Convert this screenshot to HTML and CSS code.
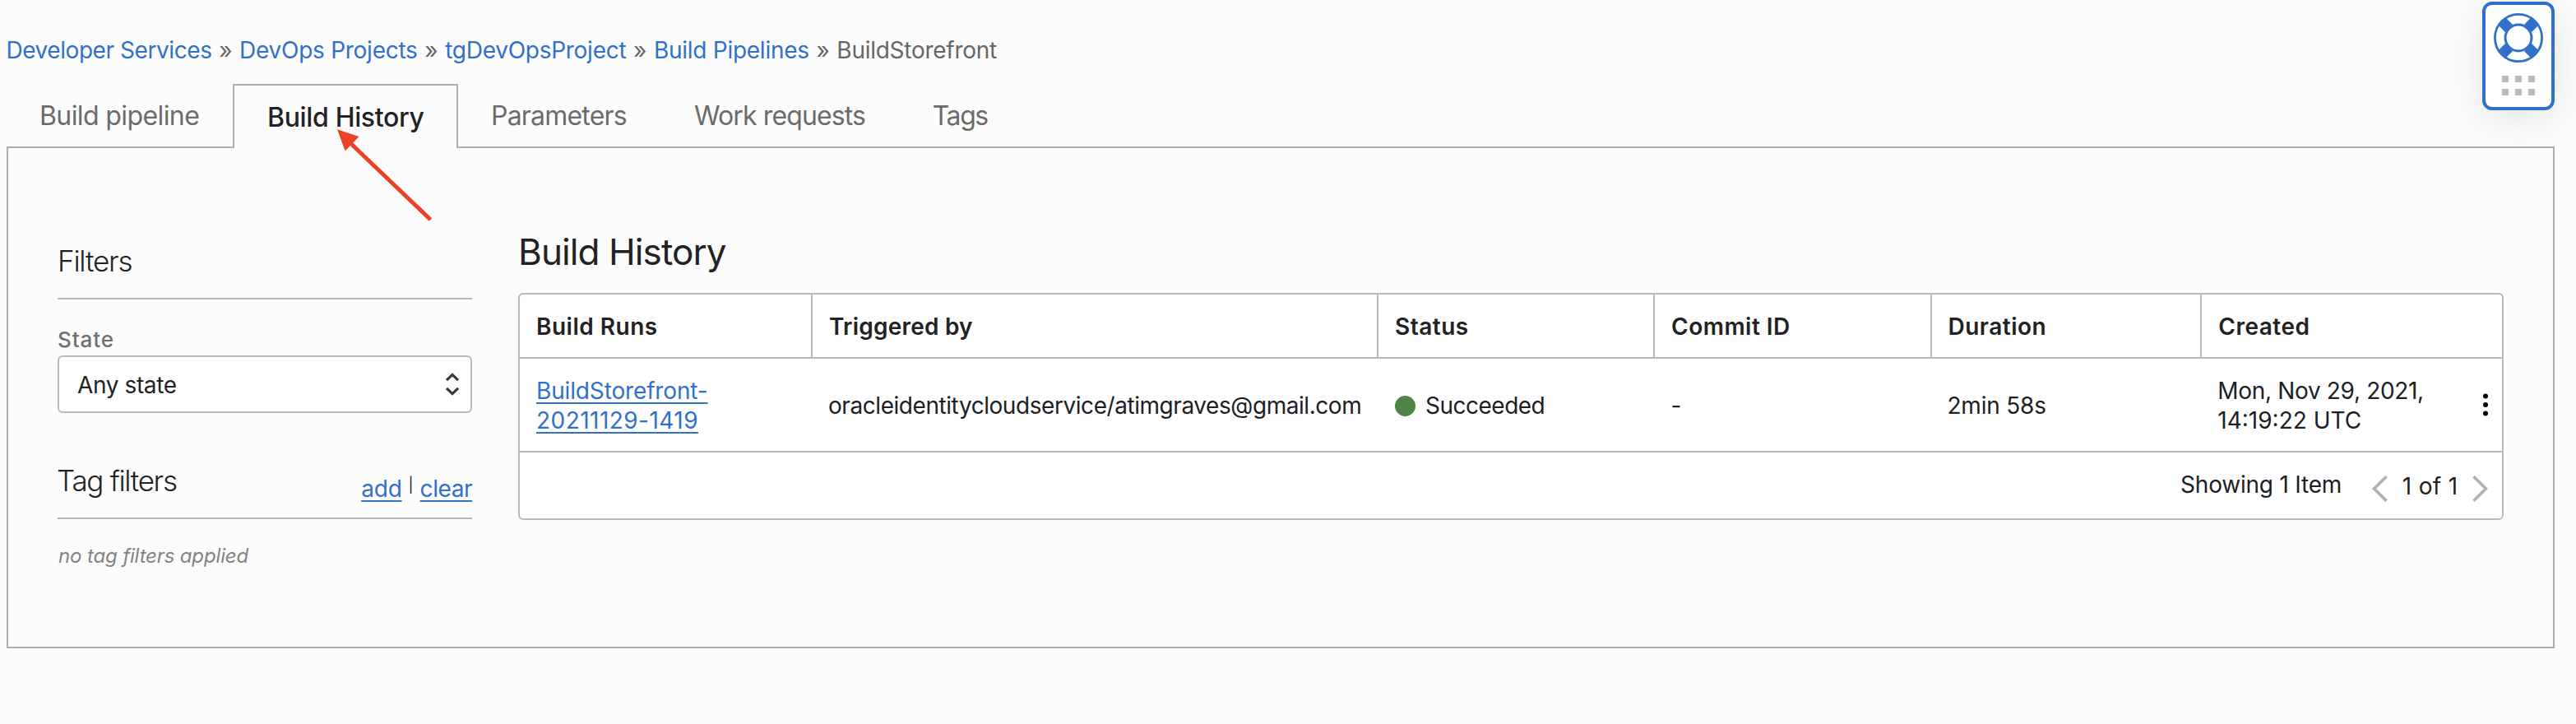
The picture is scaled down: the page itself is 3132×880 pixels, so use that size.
FILE: index.html
```
<!DOCTYPE html>
<html lang="en">
<head>
<meta charset="utf-8">
<title>Build History</title>
<link rel="stylesheet" href="styles.css">
</head>
<body>
<nav class="crumbs">
  <a class="crumb-first">Developer Services</a><span class="sep">»</span><a>DevOps Projects</a><span class="sep">»</span><a>tgDevOpsProject</a><span class="sep">»</span><a>Build Pipelines</a><span class="sep">»</span><span class="current">BuildStorefront</span>
</nav>
<div class="tabs">
  <div class="tab tab-pipeline">Build pipeline</div>
  <div class="tab tab-active">Build History</div>
  <div class="tab tab-params">Parameters</div>
  <div class="tab tab-work">Work requests</div>
  <div class="tab tab-tags">Tags</div>
</div>
<section class="panel">
  <aside class="sidebar">
    <div class="side-head"><h3 class="side-title">Filters</h3></div>
    <label class="state-label">State</label>
    <div class="select">
      <span>Any state</span>
      <svg class="select-icon" width="18" height="30" viewBox="0 0 18 30"><path d="M2 10.2 9 3.4l7 6.8M2 19.8l7 6.8 7-6.8" fill="none" stroke="#3a3a3a" stroke-width="3.2"/></svg>
    </div>
    <div class="side-head tag-head">
      <h3 class="side-title tag-title">Tag filters</h3>
      <div class="tag-links"><a class="link link-add">add</a><span class="pipe">|</span><a class="link link-clear">clear</a></div>
    </div>
    <p class="no-tags">no tag filters applied</p>
  </aside>
  <main class="main">
    <h2 class="title">Build History</h2>
    <div class="table">
      <div class="row head">
        <div class="th">Build Runs</div>
        <div class="th th-trigger">Triggered by</div>
        <div class="th">Status</div>
        <div class="th">Commit ID</div>
        <div class="th">Duration</div>
        <div class="th">Created</div>
      </div>
      <div class="row body">
        <div class="td run"><a class="link"><span class="run-name">BuildStorefront-</span><br><span class="run-id">20211129-1419</span></a></div>
        <div class="td user">oracleidentitycloudservice/atimgraves@gmail.com</div>
        <div class="td status"><span class="dot"></span>Succeeded</div>
        <div class="td commit">-</div>
        <div class="td duration">2min 58s</div>
        <div class="td created">
          <div><span class="date">Mon, Nov 29, 2021,</span><br><span>14:19:22 UTC</span></div>
          <svg class="kebab" width="6" height="28" viewBox="0 0 6 28"><circle cx="3" cy="3.6" r="3"/><circle cx="3" cy="14" r="3"/><circle cx="3" cy="24.4" r="3"/></svg>
        </div>
      </div>
      <div class="foot">
        <span class="showing">Showing 1 Item</span>
        <svg class="chev" width="19" height="32" viewBox="0 0 19 32"><path d="M17.5 1.2 2.5 16l15 14.8"/></svg>
        <span class="page">1 of 1</span>
        <svg class="chev" width="19" height="32" viewBox="0 0 19 32"><path d="M1.5 1.2l15 14.8-15 14.8"/></svg>
      </div>
    </div>
  </main>
</section>

<div class="help">
  <svg width="60" height="60" viewBox="-30 -30 60 60">
    <g fill="none" stroke="#3070cb">
      <circle r="28.6" stroke-width="2.8"/>
      <circle r="16" stroke-width="3"/>
      <path d="M11.6 11.6 19.6 19.6M-11.6 11.6-19.6 19.6M11.6-11.6 19.6-19.6M-11.6-11.6-19.6-19.6" stroke-width="12.8"/>
    </g>
  </svg>
  <div class="grip"><i></i><i></i><i></i><i></i><i></i><i></i></div>
</div>
<svg class="arrow" width="118" height="114" viewBox="408 155 118 114">
  <path d="M425 173 523.5 267" stroke="#eb4127" stroke-width="5" fill="none"/>
  <path d="M410 157.3 436.5 166 419.6 183.5z" fill="#eb4127"/>
</svg>
</body>
</html>
```
FILE: styles.css
```
* { box-sizing: border-box; }
body {
  margin: 0;
  width: 3132px;
  height: 880px;
  position: relative;
  overflow: hidden;
  background: #fcfcfc;
  color: #222;
  font: 400 28px/36px Inter, "Liberation Sans", sans-serif;
  white-space: nowrap;
}
h2, h3, p { margin: 0; }

.crumbs {
  display: flex;
  padding: 43px 0 0 7.4px;
  height: 102px;
  color: #666;
  letter-spacing: -0.265px;
}
.crumbs a { color: #3070cb; }
.crumbs .crumb-first { letter-spacing: -0.43px; }
.sep { width: 33.6px; text-align: center; }

.tabs {
  display: flex;
  height: 78px;
  margin: 0 0 -2px 8px;
  position: relative;
  z-index: 1;
  font-size: 32px;
  color: #6b6b6b;
}
.tab { padding: 21px 40px 0; }
.tab-pipeline { letter-spacing: -0.6px; width: 275px; }
.tab-active {
  width: 274px;
  padding: 21px 0 0 40px;
  border: 2px solid #adadad;
  border-bottom: 0;
  background: #fcfcfc;
  color: #222;
  font-weight: 500;
  letter-spacing: -0.34px;
}
.tab-params { letter-spacing: -0.79px; }
.tab-work { letter-spacing: -0.87px; padding-left: 42px; }
.tab-tags { letter-spacing: -1.4px; padding-left: 41.5px; }

.panel {
  display: flex;
  gap: 56px;
  width: 3098px;
  height: 610px;
  margin-left: 8px;
  padding: 100px 60px 0;
  border: 2px solid #adadad;
}

.sidebar { width: 504px; padding-top: 16px; }
.side-head {
  display: flex;
  justify-content: space-between;
  height: 68px;
  border-bottom: 2px solid #b3bac1;
}
.side-title {
  font-size: 35px;
  line-height: 42px;
  font-weight: 300;
  letter-spacing: -1.2px;
}
.tag-title { letter-spacing: -1.3px; margin-left: -1px; }
.state-label {
  display: block;
  margin: 32px 0 3px;
  font-size: 26px;
  line-height: 33px;
  font-weight: 500;
  letter-spacing: 0.9px;
  color: #707070;
}
.select {
  display: flex;
  align-items: center;
  justify-content: space-between;
  height: 70px;
  padding: 0 13px 0 22px;
  border: 2px solid #b3bac1;
  border-radius: 6px;
  background: #fff;
  letter-spacing: -0.39px;
}
.select span { padding-top: 2px; }
.tag-head { margin-top: 61px; }
.tag-links { display: flex; padding-top: 12.5px; }
.link {
  color: #3070cb;
  text-decoration: underline;
  text-decoration-thickness: 2px;
  text-underline-offset: 4px;
  text-decoration-skip-ink: none;
}
.link-add { letter-spacing: -0.2px; }
.link-clear { letter-spacing: -0.45px; }
.pipe {
  width: 22px;
  text-align: center;
  font-size: 18px;
  line-height: 28px;
}
.no-tags {
  margin-top: 30px;
  padding-left: 1px;
  font-size: 24px;
  line-height: 30px;
  font-style: italic;
  letter-spacing: -0.15px;
  color: #838383;
}

.main { width: 2414px; }
.title {
  margin: 0 0 24px;
  font-size: 44px;
  line-height: 52px;
  font-weight: 370;
  letter-spacing: -0.9px;
}
.table {
  border: 2px solid #b3bac1;
  border-radius: 6px;
  background: #fff;
  height: 276px;
}
.row {
  display: grid;
  grid-template-columns: 356px 688px 336px 336.5px 328.8px 1fr;
  border-bottom: 2px solid #b3bac1;
}
.head { height: 78px; }
.body { height: 114px; }
.th {
  padding: 21px 0 0 20px;
  border-right: 2px solid #b3bac1;
  font-weight: 600;
  letter-spacing: 0.5px;
}
.th:last-child { border-right: 0; }
.th-trigger { letter-spacing: 0.21px; }
.td {
  display: flex;
  align-items: center;
  padding: 2px 0 0 19px;
  color: #1b2027;
}
.run { padding-left: 20px; }
.run-name { letter-spacing: -0.15px; }
.run-id { letter-spacing: 0.46px; }
.user { letter-spacing: -0.44px; }
.status { letter-spacing: -0.5px; padding-left: 20.4px; }
.dot {
  width: 25px;
  height: 25px;
  margin: 1px 11.6px 0 0;
  border-radius: 50%;
  background: #4c8642;
}
.commit { padding-left: 19.5px; }
.duration { letter-spacing: -0.21px; }
.created { justify-content: space-between; padding-right: 17px; }
.date { letter-spacing: -0.33px; }
.kebab { fill: #000; margin-top: -2px; }
.foot {
  display: flex;
  justify-content: flex-end;
  align-items: flex-start;
  padding-right: 17px;
  color: #1b2027;
}
.showing { margin: 21px 36.6px 0 0; letter-spacing: -0.21px; }
.page { margin: 23px 17.6px 0 18px; letter-spacing: 0.33px; color: #222; }
.chev { margin-top: 28px; fill: none; stroke: #b0b0b0; stroke-width: 3.6; }

.help {
  position: absolute;
  z-index: 2;
  left: 3018px;
  top: 2px;
  width: 88px;
  height: 132px;
  padding: 10px 0 0 10px;
  border: 4px solid #3070cb;
  border-radius: 12px;
  background: #fff;
  box-shadow: 0 8px 48px rgba(0, 0, 0, 0.1);
}
.help svg { display: block; }
.grip {
  display: grid;
  grid-template-columns: repeat(3, 8px);
  gap: 8px;
  margin: 16px 0 0 10px;
}
.grip i { height: 8px; background: #b3bac1; }

.arrow { position: absolute; z-index: 3; left: 408px; top: 155px; }
```
